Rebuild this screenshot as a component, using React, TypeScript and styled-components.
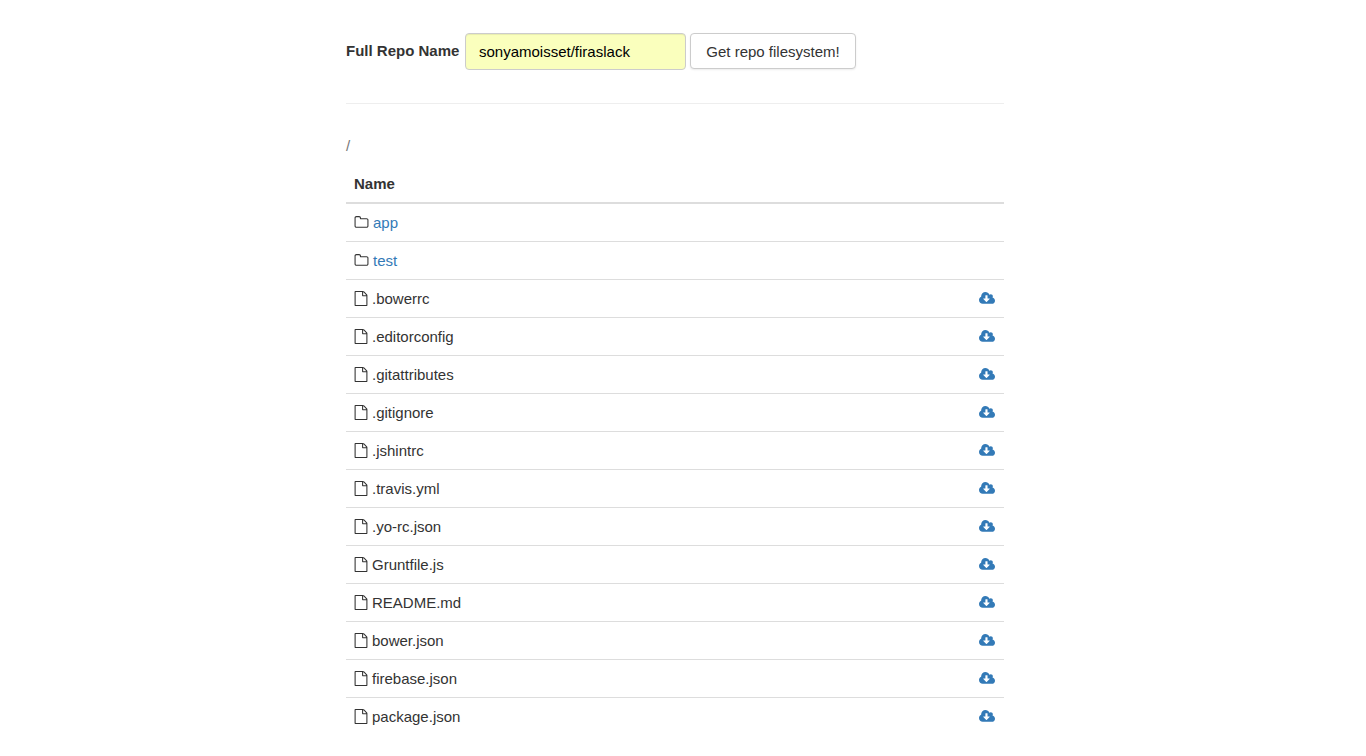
import React, { useState } from "react";
import styled, { createGlobalStyle } from "styled-components";

const GlobalStyle = createGlobalStyle`
  *, *::before, *::after { box-sizing: border-box; }
  html { height: 100%; overflow: hidden; }
  body {
    height: 100%;
    margin: 0;
    padding-right: 16px;
    overflow: hidden;
    background: #fff;
    color: #333;
    font-family: "Liberation Sans", Arial, sans-serif;
    font-size: 15px;
    line-height: 21px;
  }
`;

const Page = styled.main`
  max-width: 690px;
  margin: 0 auto;
  padding: 33px 16px 0;
`;

const RepoForm = styled.form`
  display: flex;
  align-items: flex-start;
  gap: 4px;
`;

const Label = styled.label`
  min-width: 115px;
  padding-top: 7px;
  font-weight: 700;
`;

const TextInput = styled.input`
  width: 221px;
  height: 37px;
  padding: 6px 13px;
  border: 1px solid #ccc;
  border-radius: 4px;
  background: #faffbd;
  box-shadow: inset 0 1px 1px rgba(0, 0, 0, 0.075);
  color: #000;
  font: inherit;
`;

const SubmitButton = styled.button`
  min-width: 166px;
  height: 36px;
  padding: 6px 13px;
  border: 1px solid #ccc;
  border-radius: 4px;
  background: #fff;
  box-shadow: 0 1px 2px rgba(0, 0, 0, 0.08);
  color: #333;
  font: inherit;
  white-space: nowrap;
  cursor: pointer;
`;

const Divider = styled.hr`
  height: 1px;
  margin: 33px 0 31px;
  border: 0;
  background: #eee;
`;

const Path = styled.div`
  color: #777;
`;

const FileTable = styled.table`
  width: 100%;
  margin-top: 9px;
  border-collapse: collapse;
`;

const HeadCell = styled.th`
  padding: 8px;
  border-bottom: 2px solid #ddd;
  text-align: left;
`;

const Cell = styled.td<{ $action?: boolean }>`
  padding: 8px ${(p) => (p.$action ? 9 : 8)}px 8px 8px;
  border-top: 1px solid #ddd;
`;

const Entry = styled.div`
  display: flex;
  gap: 4px;
`;

const FolderLink = styled.a`
  color: #337ab7;
  text-decoration: none;
`;

const DownloadLink = styled.a`
  display: flex;
  justify-content: flex-end;
  height: 21px;
  color: #337ab7;
`;

const Icon = styled.svg<{ $width: number }>`
  display: block;
  flex: none;
  width: ${(p) => p.$width}px;
  height: 15px;
  margin-top: 3px;
  fill: currentColor;
`;

const FolderIcon = () => (
  <Icon $width={15} viewBox="64 0 1664 1792" aria-hidden="true">
    <path d="M1600 1312v-704q0-40-28-68t-68-28h-704q-40 0-68-28t-28-68v-64q0-40-28-68t-68-28h-320q-40 0-68 28t-28 68v960q0 40 28 68t68 28h1216q40 0 68-28t28-68zm128-704v704q0 92-66 158t-158 66h-1216q-92 0-158-66t-66-158v-960q0-92 66-158t158-66h320q92 0 158 66t66 158v32h672q92 0 158 66t66 158z" />
  </Icon>
);

const FileIcon = () => (
  <Icon $width={14} viewBox="128 0 1536 1792" aria-hidden="true">
    <path d="M1596 380q28 28 48 76t20 88v1152q0 40-28 68t-68 28h-1344q-40 0-68-28t-28-68v-1600q0-40 28-68t68-28h896q40 0 88 20t76 48zm-444-244v376h376q-10-29-22-41l-313-313q-12-12-41-22zm384 1528v-1024h-416q-40 0-68-28t-28-68v-416h-768v1536h1280z" />
  </Icon>
);

const DownloadIcon = () => (
  <Icon $width={16} viewBox="-64 0 1920 1792" aria-hidden="true">
    <path d="M1216 928q0-14-9-23t-23-9h-224v-352q0-13-9.5-22.5t-22.5-9.5h-192q-13 0-22.5 9.5t-9.5 22.5v352h-224q-13 0-22.5 9.5t-9.5 22.5q0 14 9 23l352 352q9 9 23 9t23-9l351-351q10-12 10-24zm640 224q0 159-112.5 271.5t-271.5 112.5h-1088q-185 0-316.5-131.5t-131.5-316.5q0-130 70-240t188-165q-2-30-2-43 0-212 150-362t362-150q156 0 285.5 87t188.5 231q71-62 166-62 106 0 181 75t75 181q0 76-41 138 130 31 213.5 135.5t83.5 238.5z" />
  </Icon>
);

const folders = ["app", "test"];
const files = [
  ".bowerrc",
  ".editorconfig",
  ".gitattributes",
  ".gitignore",
  ".jshintrc",
  ".travis.yml",
  ".yo-rc.json",
  "Gruntfile.js",
  "README.md",
  "bower.json",
  "firebase.json",
  "package.json",
];

export default function App() {
  const [repo, setRepo] = useState("sonyamoisset/firaslack");

  return (
    <>
      <GlobalStyle />
      <Page>
        <RepoForm onSubmit={(e) => e.preventDefault()}>
          <Label htmlFor="repo">Full Repo Name</Label>
          <TextInput
            id="repo"
            type="text"
            spellCheck={false}
            value={repo}
            onChange={(e) => setRepo(e.target.value)}
          />
          <SubmitButton type="submit">Get repo filesystem!</SubmitButton>
        </RepoForm>
        <Divider />
        <Path>/</Path>
        <FileTable>
          <thead>
            <tr>
              <HeadCell colSpan={2} scope="col">
                Name
              </HeadCell>
            </tr>
          </thead>
          <tbody>
            {folders.map((name) => (
              <tr key={name}>
                <Cell>
                  <Entry>
                    <FolderIcon />
                    <FolderLink href={`#${name}`}>{name}</FolderLink>
                  </Entry>
                </Cell>
                <Cell $action />
              </tr>
            ))}
            {files.map((name) => (
              <tr key={name}>
                <Cell>
                  <Entry>
                    <FileIcon />
                    <span>{name}</span>
                  </Entry>
                </Cell>
                <Cell $action>
                  <DownloadLink href={`#${name}`} aria-label={`Download ${name}`}>
                    <DownloadIcon />
                  </DownloadLink>
                </Cell>
              </tr>
            ))}
          </tbody>
        </FileTable>
      </Page>
    </>
  );
}
